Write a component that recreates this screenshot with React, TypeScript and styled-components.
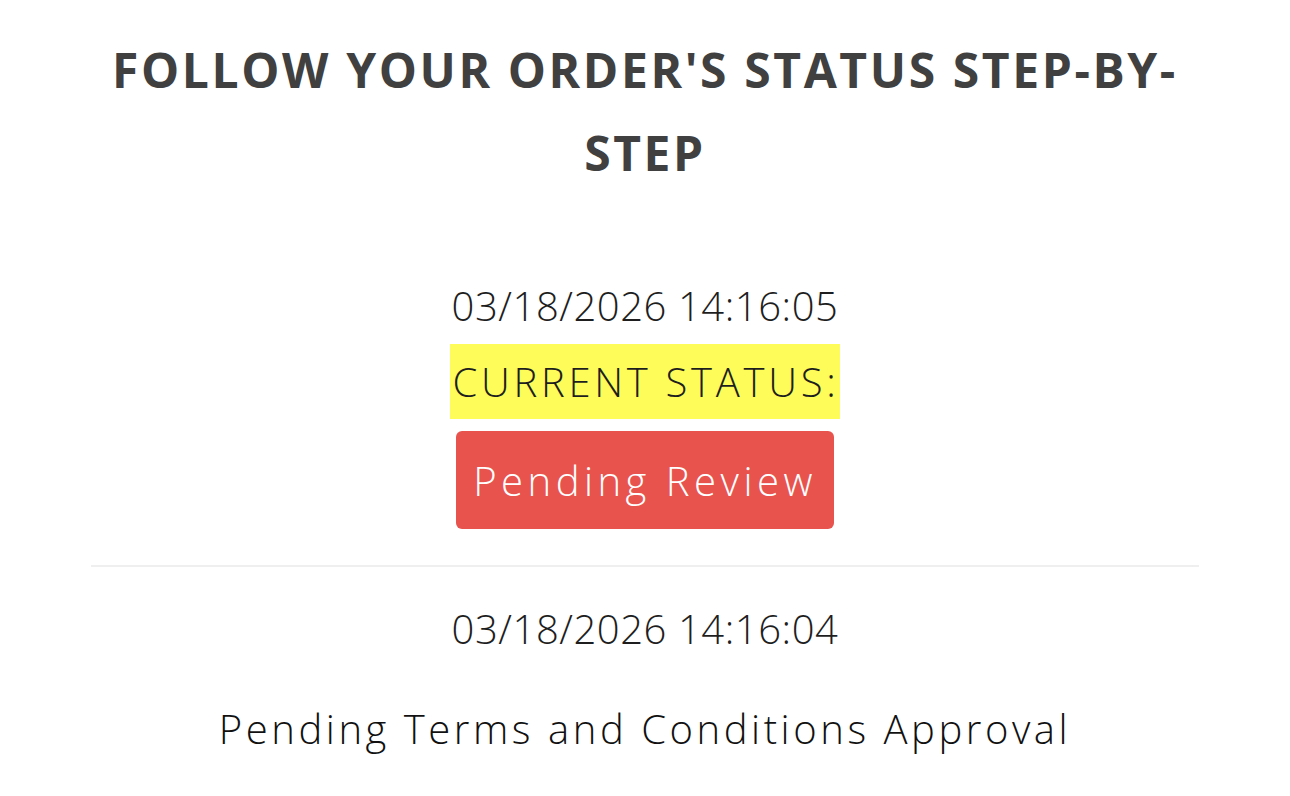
import React from "react";
import styled, { createGlobalStyle } from "styled-components";

const GlobalStyle = createGlobalStyle`
	html, body {
		margin: 0;
		padding: 0;
		background: #ffffff;
	}
	body {
		font-family: "Open Sans", "Liberation Sans", sans-serif;
	}
`;

const HISTORY = [
	{ date: "03/18/2026 14:16:04", text: "Pending Terms and Conditions Approval" },
];

export default function App() {
	return (
		<>
			<GlobalStyle />
			<Page>
				<Title>FOLLOW YOUR ORDER'S STATUS STEP-BY-STEP</Title>
				<Current>
					<DateText>03/18/2026 14:16:05</DateText>
					<Highlight>CURRENT STATUS:</Highlight>
					<StatusBadge>Pending Review</StatusBadge>
				</Current>
				{HISTORY.map(({ date, text }) => (
					<Entry key={date}>
						<DateText>{date}</DateText>
						<EntryText>{text}</EntryText>
					</Entry>
				))}
			</Page>
		</>
	);
}

const Page = styled.div`
	width: 1108px;
	margin: 0 auto;
	padding-top: 28px;
	text-align: center;
`;

const Title = styled.h2`
	margin: 0;
	font-family: "Open Sans", sans-serif;
	font-size: 48px;
	font-weight: 700;
	line-height: 83px;
	letter-spacing: 2.6px;
	color: #404040;
`;

const Current = styled.div`
	display: flex;
	flex-direction: column;
	align-items: center;
	margin-top: 82px;
	padding-bottom: 36px;
	border-bottom: 2px solid #efefef;
`;

const DateText = styled.div`
	font-size: 40px;
	font-weight: 300;
	line-height: 60px;
	letter-spacing: 0.55px;
	color: #1e1e1e;
`;

const Highlight = styled.div`
	margin-top: 8px;
	padding: 0 1px 0 3px;
	font-size: 40px;
	font-weight: 300;
	line-height: 75px;
	letter-spacing: 3.7px;
	color: #1e1e1e;
	background: #fdfc58;
`;

const StatusBadge = styled.div`
	margin-top: 12px;
	width: 378px;
	height: 98px;
	display: flex;
	align-items: center;
	justify-content: center;
	border-radius: 6px;
	background: #e8534e;
	color: #ffffff;
	font-size: 40px;
	font-weight: 300;
	letter-spacing: 4.5px;
`;

const Entry = styled.div`
	display: flex;
	flex-direction: column;
	align-items: center;
	padding-top: 32px;
`;

const EntryText = styled.div`
	margin-top: 40px;
	font-size: 40px;
	font-weight: 300;
	line-height: 60px;
	letter-spacing: 3.55px;
	color: #111111;
`;
